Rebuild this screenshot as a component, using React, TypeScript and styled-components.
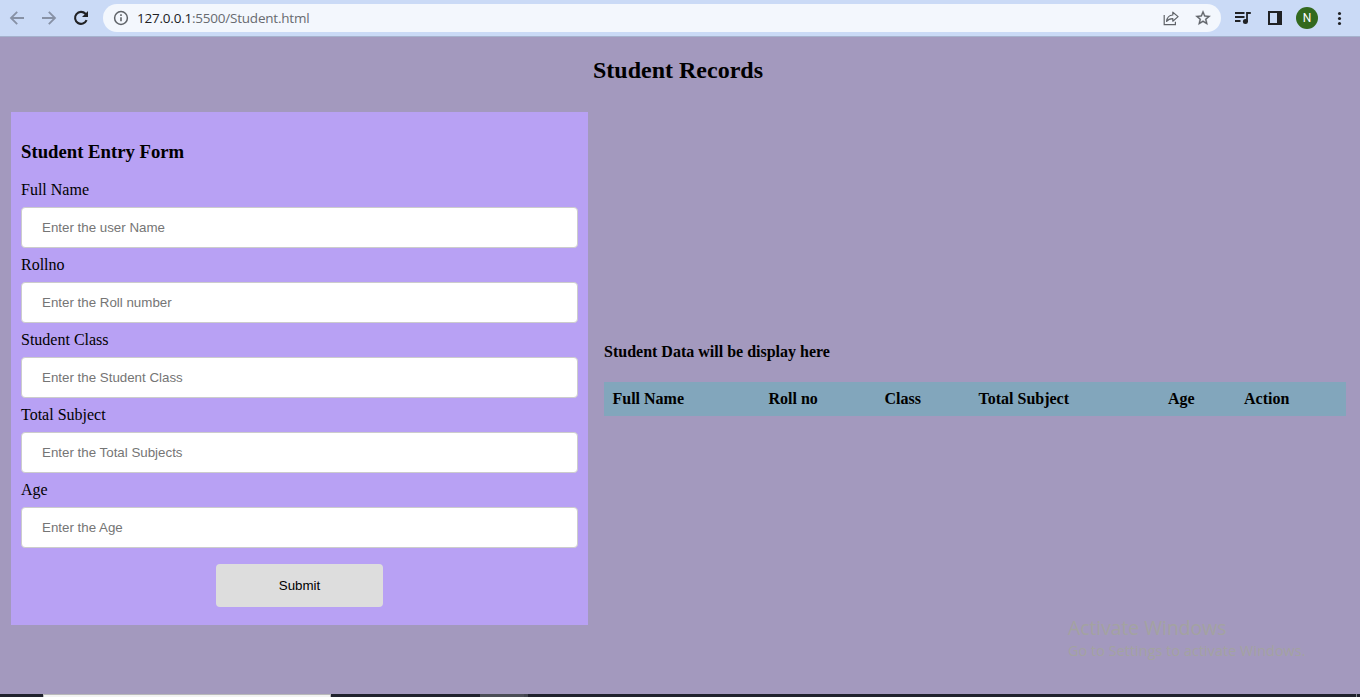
import React from "react";
import styled, { createGlobalStyle } from "styled-components";

const GlobalStyle = createGlobalStyle`
  *, *::before, *::after { box-sizing: border-box; }
  html, body { margin: 0; padding: 0; }
  body {
    background: #a399be;
    color: #000;
    font: 16px/18px "Liberation Serif", "Times New Roman", serif;
    overflow: hidden;
  }
`;

const Screen = styled.div`
  position: relative;
  display: flex;
  flex-direction: column;
  width: 1360px;
  height: 697px;
`;

const Toolbar = styled.header`
  display: flex;
  align-items: flex-start;
  flex: none;
  height: 37px;
  padding: 4px 11px 0 8px;
  background: #cadaf6;
  border-bottom: 1px solid #a5b2cd;
`;

const NavButtons = styled.nav`
  display: flex;
  gap: 14px;
  margin-top: 5px;
  width: 95px;
  flex: none;
`;

const Icon = styled.svg<{ $size?: number }>`
  display: block;
  flex: none;
  width: ${(p) => p.$size ?? 18}px;
  height: ${(p) => p.$size ?? 18}px;
`;

const AddressBar = styled.div`
  display: flex;
  align-items: center;
  flex: none;
  width: 1118px;
  height: 28px;
  padding: 0 9px 0 10px;
  border-radius: 14px;
  background: #f3f7fd;
`;

const Url = styled.span`
  flex: 1;
  margin-left: 8px;
  font: 13.5px/20px "Open Sans", "Noto Sans", sans-serif;
  letter-spacing: -0.22px;
  color: #686b70;
`;

const Host = styled.span`
  color: #202124;
`;

const AddressActions = styled.div`
  display: flex;
  gap: 14px;
`;

const BrowserActions = styled.div`
  display: flex;
  align-items: center;
  height: 28px;
  margin-left: 12px;
  gap: 15px;
`;

const Avatar = styled.div`
  display: grid;
  place-items: center;
  width: 22px;
  height: 22px;
  margin: 0 -3px;
  border-radius: 50%;
  background: #33691e;
  color: #fff;
  font: 12px/22px Roboto, sans-serif;
`;

const Page = styled.main`
  flex: 1;
  padding: 20px 14px 0 11px;
`;

const Title = styled.h2`
  margin: 0 3px 28px 0;
  font-size: 24px;
  line-height: 27px;
  text-align: center;
  text-indent: 2px;
`;

const Columns = styled.div`
  display: flex;
  align-items: center;
  gap: 16px;
`;

const Form = styled.form`
  display: flex;
  flex-direction: column;
  width: 577px;
  height: 513px;
  padding: 29px 10px 18px;
  background: #b8a1f4;
`;

const FormTitle = styled.h3`
  margin: 0 0 19px;
  font-size: 18.72px;
  line-height: 21px;
`;

const Field = styled.label`
  display: block;
  height: 75px;
`;

const Input = styled.input`
  display: block;
  width: 100%;
  height: 41px;
  margin-top: 8px;
  padding: 12px 20px;
  border: 1px solid #ccc;
  border-radius: 4px;
  background: #fff;
  font: 13.333px "Liberation Sans", Arial, sans-serif;
  &::placeholder { color: #757575; opacity: 1; }
`;

const Submit = styled.button`
  align-self: center;
  width: 167px;
  height: 43px;
  margin-top: 8px;
  border: 0;
  border-radius: 4px;
  background: #ddd;
  color: #000;
  font: 13.333px "Liberation Sans", Arial, sans-serif;
`;

const Records = styled.section`
  width: 742px;
  padding-top: 21px;
`;

const RecordsTitle = styled.h4`
  margin: 0 0 21px;
  font-size: 16px;
  line-height: 18px;
`;

const Table = styled.table`
  width: 742px;
  table-layout: fixed;
  border-collapse: collapse;
  background: #82a6bc;
`;

const HeadCell = styled.th<{ $width: number }>`
  width: ${(p) => p.$width}px;
  padding: 8px 7.5px 8px 8.5px;
  text-align: left;
`;

const Watermark = styled.aside`
  position: absolute;
  left: 1068px;
  top: 615px;
  color: #a3a3a1;
  font-family: "Open Sans", "Noto Sans", sans-serif;
  font-weight: 400;
  white-space: nowrap;
`;

const WatermarkTitle = styled.div`
  font-size: 19.5px;
  line-height: 26px;
  letter-spacing: -0.1px;
`;

const WatermarkText = styled.div`
  font-size: 14.5px;
  line-height: 19px;
  letter-spacing: 0;
`;

const Taskbar = styled.footer`
  display: flex;
  flex: none;
  height: 3px;
  background: #20222d;
`;

const TaskSearch = styled.div`
  width: 288px;
  margin-left: 43px;
  border: 1px solid #b9b9ba;
  border-bottom: 0;
  background: #f3f3f3;
`;

const TaskItem = styled.div`
  width: 48px;
  margin-left: 149px;
  background: #4b4d57;
  border-right: 4px solid #42444e;
`;

const TaskDivider = styled.div`
  width: 1px;
  margin: 0 3px 0 auto;
  background: #85868d;
`;

const fields = [
  ["Full Name", "Enter the user Name"],
  ["Rollno", "Enter the Roll number"],
  ["Student Class", "Enter the Student Class"],
  ["Total Subject", "Enter the Total Subjects"],
  ["Age", "Enter the Age"],
];

const columns: [string, number][] = [
  ["Full Name", 156],
  ["Roll no", 116],
  ["Class", 94],
  ["Total Subject", 189.5],
  ["Age", 76],
  ["Action", 110.5],
];

export default function App() {
  return (
    <Screen>
      <GlobalStyle />
      <Toolbar>
        <NavButtons>
          <Icon viewBox="0 0 18 18" fill="none" stroke="#8791a5" strokeWidth="1.8">
            <path d="M16 9H3M9.2 2.8 3 9l6.2 6.2" />
          </Icon>
          <Icon viewBox="0 0 18 18" fill="none" stroke="#8791a5" strokeWidth="1.8">
            <path d="M2 9h13M8.8 2.8 15 9l-6.2 6.2" />
          </Icon>
          <Icon viewBox="0 0 18 18" fill="none" stroke="#202124" strokeWidth="2.1">
            <path d="M14.6 11.2A6 6 0 1 1 13.5 4.8L15 6.3" />
            <path d="M16 2v6h-6z" fill="#202124" stroke="none" />
          </Icon>
        </NavButtons>
        <AddressBar>
          <Icon $size={16} viewBox="0 0 16 16" fill="none" stroke="#5f6368" strokeWidth="1.5">
            <circle cx="8" cy="8" r="6.4" />
            <path d="M8 7.2v4M8 4.3v1.6" strokeWidth="1.6" />
          </Icon>
          <Url>
            <Host>127.0.0.1</Host>:5500/Student.html
          </Url>
          <AddressActions>
            <Icon viewBox="0 0 18 18" fill="none" stroke="#5f6368" strokeWidth="1.2">
              <path d="M2.2 6v9.6h11.2v-2.8" />
              <path d="M4.6 12.4C5 8.6 7.2 6.2 10.8 6V3.2l5.3 4.4-5.3 4.6V9.6c-2.8 0-4.8.8-6.2 2.8z" strokeLinejoin="round" />
            </Icon>
            <Icon viewBox="0 0 24 24" fill="#5f6368" stroke="#5f6368" strokeWidth="0.4">
              <path d="M22 9.24l-7.19-.62L12 2 9.19 8.63 2 9.24l5.46 4.73L5.82 21 12 17.27 18.18 21l-1.63-7.03L22 9.24zM12 15.4l-3.76 2.27 1-4.28-3.32-2.88 4.38-.38L12 6.1l1.71 4.04 4.38.38-3.32 2.88 1 4.28L12 15.4z" />
            </Icon>
          </AddressActions>
        </AddressBar>
        <BrowserActions>
          <Icon viewBox="0 0 18 18" fill="none" stroke="#202124" strokeWidth="1.8">
            <path d="M2 4h9.5M2 8h9.5M2 12h5.5M14 13V4h3.8" />
            <circle cx="12.4" cy="12.6" r="2.5" fill="#202124" stroke="none" />
          </Icon>
          <Icon viewBox="0 0 18 18" fill="#202124">
            <path fillRule="evenodd" d="M2 2h14v14H2zm2 2v10h7V4z" />
          </Icon>
          <Avatar>N</Avatar>
          <Icon viewBox="0 0 18 18" fill="#202124">
            <circle cx="9.5" cy="4.5" r="1.55" />
            <circle cx="9.5" cy="9.5" r="1.55" />
            <circle cx="9.5" cy="14.5" r="1.55" />
          </Icon>
        </BrowserActions>
      </Toolbar>
      <Page>
        <Title>Student Records</Title>
        <Columns>
          <Form onSubmit={(e) => e.preventDefault()}>
            <FormTitle>Student Entry Form</FormTitle>
            {fields.map(([label, placeholder]) => (
              <Field key={label}>
                {label}
                <Input placeholder={placeholder} />
              </Field>
            ))}
            <Submit>Submit</Submit>
          </Form>
          <Records>
            <RecordsTitle>Student Data will be display here</RecordsTitle>
            <Table>
              <thead>
                <tr>
                  {columns.map(([name, width]) => (
                    <HeadCell key={name} $width={width}>{name}</HeadCell>
                  ))}
                </tr>
              </thead>
            </Table>
          </Records>
        </Columns>
      </Page>
      <Taskbar>
        <TaskSearch />
        <TaskItem />
        <TaskDivider />
      </Taskbar>
      <Watermark>
        <WatermarkTitle>Activate Windows</WatermarkTitle>
        <WatermarkText>Go to Settings to activate Windows.</WatermarkText>
      </Watermark>
    </Screen>
  );
}
